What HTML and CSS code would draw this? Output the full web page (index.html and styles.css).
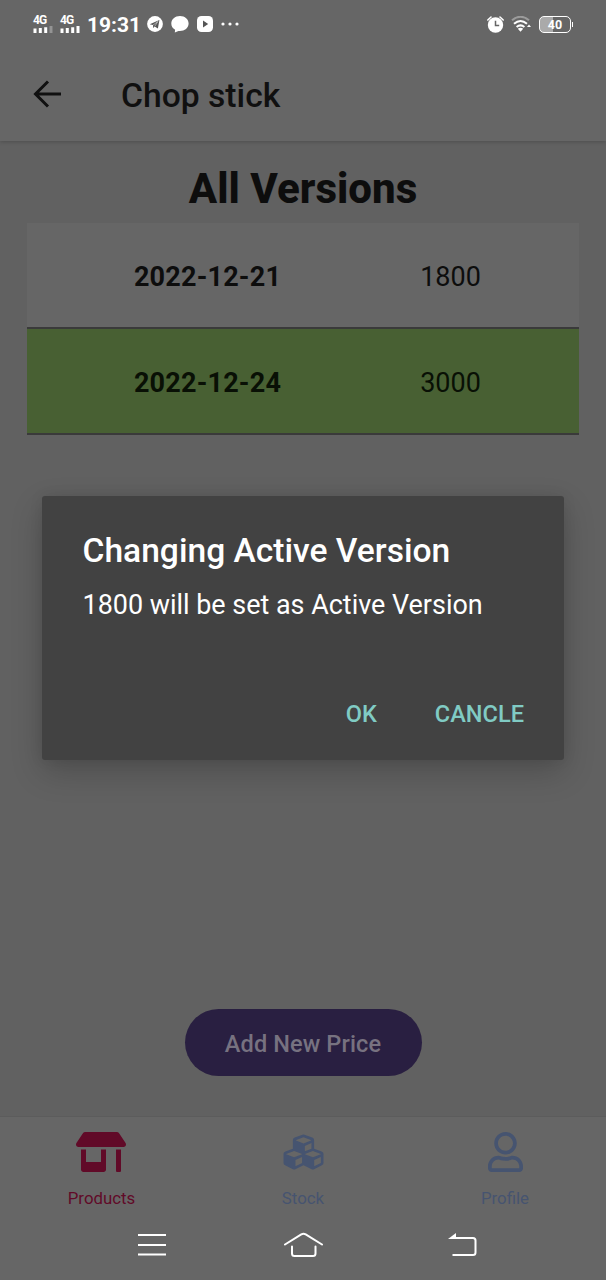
FILE: index.html
```html
<!DOCTYPE html>
<html lang="en">
<head>
<meta charset="utf-8">
<title>Chop stick</title>
<link rel="stylesheet" href="styles.css">
</head>
<body>
<div class="screen">
  <header class="top">
    <div class="status">
      <div class="cell"><span class="net">4G</span>
        <svg width="20" height="7" viewBox="0 0 20 7" fill="#fff"><path d="M.5 2.500h3V7h-3zM5.800 2h3v5h-3zM11.200 1.200h3V7h-3z"/><path d="M16.500 0h3v7h-3z" opacity=".3"/></svg>
      </div>
      <div class="cell"><span class="net">4G</span>
        <svg width="20" height="7" viewBox="0 0 20 7" fill="#fff"><path d="M.5 2.500h3V7h-3zM5.800 2h3v5h-3zM11.200 1.200h3V7h-3zM16.500 0h3v7h-3z"/></svg>
      </div>
      <span class="clock">19:31</span>
      <svg class="telegram" width="16" height="16" viewBox="0 0 16 16"><circle cx="8" cy="8" r="7.900" fill="#fff"/><path d="M2.800 8.200L12.400 4l-1.500 8.600-3.200-2.200-1.500 1.500-.2-2.800z" fill="#555"/><path d="M6 9.100l5-3.700-3.300 5" stroke="#ddd" stroke-width=".6" fill="none"/></svg>
      <svg class="chat" width="18" height="17" viewBox="0 0 18 17"><path d="M9 0C4 0 .3 3.200.3 7.500c0 2.800 1.400 5 3.800 6.200L3.800 16.600 7.500 14.900C13 15.500 17.600 12.400 17.600 7.500 17.600 3.200 14 0 9 0z" fill="#fff"/></svg>
      <svg class="video" width="16" height="16" viewBox="0 0 16 16"><rect width="16" height="16" rx="4.500" fill="#fff"/><path d="M6 4.600l5.200 3.400L6 11.400z" fill="#555"/></svg>
      <svg class="more" width="18" height="4" viewBox="0 0 18 4" fill="#fff"><circle cx="2" cy="2" r="1.600"/><circle cx="9" cy="2" r="1.600"/><circle cx="16" cy="2" r="1.600"/></svg>
      <svg class="alarm" width="17" height="17" viewBox="0 0 17 17"><circle cx="8.500" cy="9" r="7.700" fill="#fff"/><path d="M.8 4L4 1M16.200 4L13 1" stroke="#fff" stroke-width="1.600" stroke-linecap="round"/><path d="M8.500 4.800v4.700h3.700" stroke="#666" stroke-width="1.500" fill="none"/></svg>
      <svg class="wifi" width="20" height="16" viewBox="0 0 20 16" fill="none" stroke="#fff" stroke-width="2"><path d="M1 4.300Q9.500-2.800 18 4.300" opacity=".35"/><path d="M3 7.800Q9.500 2.200 16 7.800M5.600 11Q9.500 7.700 13.400 11"/><path d="M6.800 12.700Q9.500 10.800 12.200 12.700L9.500 15.700zM18 8.500l2 2.500h-4z" fill="#fff" stroke="none"/></svg>
      <div class="battery"><span>40</span></div>
    </div>
    <div class="appbar">
      <svg width="28" height="28" viewBox="0 0 28 28" fill="none" stroke="#101010" stroke-width="3"><path d="M28 14H3M15 1.500L2.500 14 15 26.500"/></svg>
      <h1>Chop stick</h1>
    </div>
  </header>

  <main>
    <h2>All Versions</h2>
    <div class="versions">
      <div class="row"><span class="date">2022-12-21</span><span class="price">1800</span></div>
      <div class="row active"><span class="date">2022-12-24</span><span class="price">3000</span></div>
    </div>
    <button class="add">Add New Price</button>
  </main>

  <footer>
    <nav class="tabs">
      <div class="tab selected">
        <svg width="50" height="40" viewBox="0 0 640 512" fill="currentColor"><path d="M320 384H128V224H64v256c0 17.700 14.300 32 32 32h256c17.700 0 32-14.300 32-32V224h-64v160zm314.600-241.800l-85.300-128c-6-8.900-16-14.200-26.700-14.200H117.400c-10.700 0-20.700 5.300-26.600 14.200l-85.300 128c-14.200 21.300 1 49.800 26.600 49.800H608c25.500 0 40.700-28.500 26.600-49.800zM512 496c0 8.800 7.200 16 16 16h32c8.800 0 16-7.200 16-16V224h-64v272z"/></svg>
        <span>Products</span>
      </div>
      <div class="tab">
        <svg width="41" height="40" viewBox="0 0 512 512" fill="currentColor"><path d="M488.600 250.200L392 214V105.500c0-15-9.300-28.400-23.400-33.700l-100-37.500c-8.100-3.100-17.100-3.100-25.300 0l-100 37.500c-14.100 5.300-23.400 18.700-23.400 33.700V214l-96.600 36.200C9.300 255.500 0 268.900 0 283.900V394c0 13.600 7.700 26.100 19.900 32.200l100 50c10.100 5.100 22.100 5.100 32.200 0l103.900-52 103.900 52c10.100 5.100 22.100 5.100 32.200 0l100-50c12.200-6.100 19.900-18.600 19.900-32.200V283.900c0-15-9.300-28.400-23.400-33.700zM358 214.800l-85 31.900v-68.200l85-37v73.300zM154 104.100l102-38.200 102 38.200v.6l-102 41.400-102-41.400v-.6zm84 291.100l-85 42.500v-79.100l85-38.800v75.400zm0-112l-102 41.400-102-41.400v-.6l102-38.200 102 38.200v.6zm240 112l-85 42.500v-79.100l85-38.800v75.400zm0-112l-102 41.400-102-41.400v-.6l102-38.200 102 38.200v.6z"/></svg>
        <span>Stock</span>
      </div>
      <div class="tab">
        <svg width="35" height="40" viewBox="0 0 448 512" fill="currentColor"><path d="M313.600 304c-28.700 0-42.500 16-89.600 16-47.100 0-60.800-16-89.600-16C60.200 304 0 364.200 0 438.400V464c0 26.500 21.500 48 48 48h352c26.500 0 48-21.500 48-48v-25.600c0-74.200-60.200-134.400-134.400-134.400zM400 464H48v-25.600c0-47.600 38.800-86.400 86.400-86.400 14.600 0 38.300 16 89.600 16 51.700 0 74.900-16 89.600-16 47.600 0 86.400 38.800 86.400 86.400V464zM224 288c79.500 0 144-64.500 144-144S303.500 0 224 0 80 64.500 80 144s64.500 144 144 144zm0-240c52.900 0 96 43.100 96 96s-43.100 96-96 96-96-43.100-96-96 43.100-96 96-96z"/></svg>
        <span>Profile</span>
      </div>
    </nav>
    <div class="system">
      <svg class="menu" width="28" height="22" viewBox="0 0 28 22" stroke="#fff" stroke-width="2"><path d="M0 1h28M0 11h28M0 20.500h28"/></svg>
      <svg class="home" width="40" height="26" viewBox="0 0 40 26" fill="none" stroke="#fff" stroke-width="2" stroke-linecap="round" stroke-linejoin="round"><path d="M1 12.500L17.300 2.300Q19.500 1 21.700 2.300L38 12.500M8 14.500v7q0 2.500 2.500 2.500h18.500q2.500 0 2.500-2.500v-7"/></svg>
      <svg class="back" width="30" height="25" viewBox="0 0 30 25" fill="none" stroke="#fff" stroke-width="2"><path d="M3 5h22q2.500 0 2.500 2.500v12q0 2.500-2.500 2.500H4.500"/><path d="M0 6L8 0v6z" fill="#fff" stroke="none"/></svg>
    </div>
  </footer>

  <div class="dialog" role="alertdialog">
    <h3>Changing Active Version</h3>
    <p>1800 will be set as Active Version</p>
    <div class="actions"><button>OK</button><button>CANCLE</button></div>
  </div>
</div>
</body>
</html>
```

FILE: styles.css
```css
* { box-sizing: border-box; }
body { margin: 0; font-family: Roboto, sans-serif; }
h1, h2, h3, p { margin: 0; white-space: nowrap; }
button { border: 0; background: none; font-family: inherit; padding: 0; white-space: nowrap; }
svg { display: block; flex: none; }

.screen {
  position: relative;
  width: 606px;
  height: 1280px;
  display: flex;
  flex-direction: column;
  background: #616161;
  overflow: hidden;
}

.top {
  height: 141px;
  background: #666;
  box-shadow: 0 1px 4px rgba(0, 0, 0, .2);
}
.status {
  height: 48px;
  display: flex;
  align-items: center;
  padding: 0 35px 0 33px;
  color: #fff;
}
.cell { width: 20px; margin-right: 7px; padding-bottom: 1px; }
.net { display: block; font-size: 12px; line-height: 11px; font-weight: 700; letter-spacing: -.8px; }
.clock { font-size: 21px; font-weight: 700; width: 53px; margin-right: 7px; padding-top: 1px; }
.telegram { margin-right: 8px; }
.chat { margin-right: 8px; }
.video { margin-right: 8px; }
.alarm { margin-left: auto; margin-right: 7px; }
.wifi { margin-right: 8px; }
.battery {
  position: relative;
  width: 32px;
  height: 17px;
  border: 1.500px solid #fff;
  border-radius: 5px;
  background: linear-gradient(90deg, #aaa 42%, #666 42%);
  font-size: 12.500px;
  line-height: 15px;
  font-weight: 700;
  text-align: center;
}
.battery::after {
  content: "";
  position: absolute;
  right: -3px;
  top: 5px;
  width: 1px;
  height: 5px;
  background: #fff;
}
.appbar {
  height: 93px;
  display: flex;
  align-items: center;
  gap: 60px;
  padding: 0 0 1px 33px;
}
.appbar h1 { font-size: 33.670px; font-weight: 500; color: #101010; padding-top: 2px; }

main {
  flex: 1;
  display: flex;
  flex-direction: column;
  align-items: center;
  padding: 23px 27px 40px;
}
h2 { font-size: 42px; line-height: 50px; font-weight: 800; color: #0d0d0d; }
.versions { width: 552px; margin-top: 9px; }
.row {
  display: grid;
  grid-template-columns: 361px 125px;
  height: 106px;
  padding-top: 3px;
  align-items: center;
  text-align: center;
  background: #666;
  border-bottom: 2px solid #3a3a3a;
  color: #0d0d0d;
  font-size: 27px;
}
.row.active { background: #486033; color: #091005; }
.date { font-weight: 700; letter-spacing: .2px; }
.add {
  margin-top: auto;
  width: 237px;
  height: 67px;
  padding-top: 2px;
  border-radius: 34px;
  background: #291f41;
  color: #777280;
  font-size: 23.570px;
  font-weight: 500;
  letter-spacing: .1px;
}

footer {
  height: 164px;
  background: #666;
  border-top: 1px solid #5c5c5c;
}
.tabs { display: grid; grid-template-columns: repeat(3, 202px); padding-top: 15px; }
.tab {
  display: flex;
  flex-direction: column;
  align-items: center;
  gap: 16px;
  color: #465470;
  font-size: 16.830px;
  line-height: 20px;
}
.tab.selected { color: #610a28; }
.tab.selected span { padding-left: 1px; }
.system {
  display: flex;
  align-items: center;
  height: 26px;
  margin-top: 24px;
  padding-left: 138px;
}
.home { margin-left: 118px; }
.back { margin-left: 124px; }

.dialog {
  position: absolute;
  left: 42px;
  top: 496px;
  width: 522px;
  height: 264px;
  padding: 35px 40px 0 40.500px;
  border-radius: 3px;
  background: #424242;
  color: #fff;
  box-shadow: 0 12px 32px rgba(0, 0, 0, .2), 0 0 14px rgba(0, 0, 0, .08);
}
.dialog h3 { font-size: 33.600px; line-height: 40px; font-weight: 500; }
.dialog p { font-size: 26.930px; line-height: 32px; margin-top: 18px; }
.actions { display: flex; justify-content: flex-end; gap: 58px; margin-top: 79px; }
.actions button { color: #80cbc4; font-size: 23.570px; line-height: 28px; font-weight: 500; }
```
